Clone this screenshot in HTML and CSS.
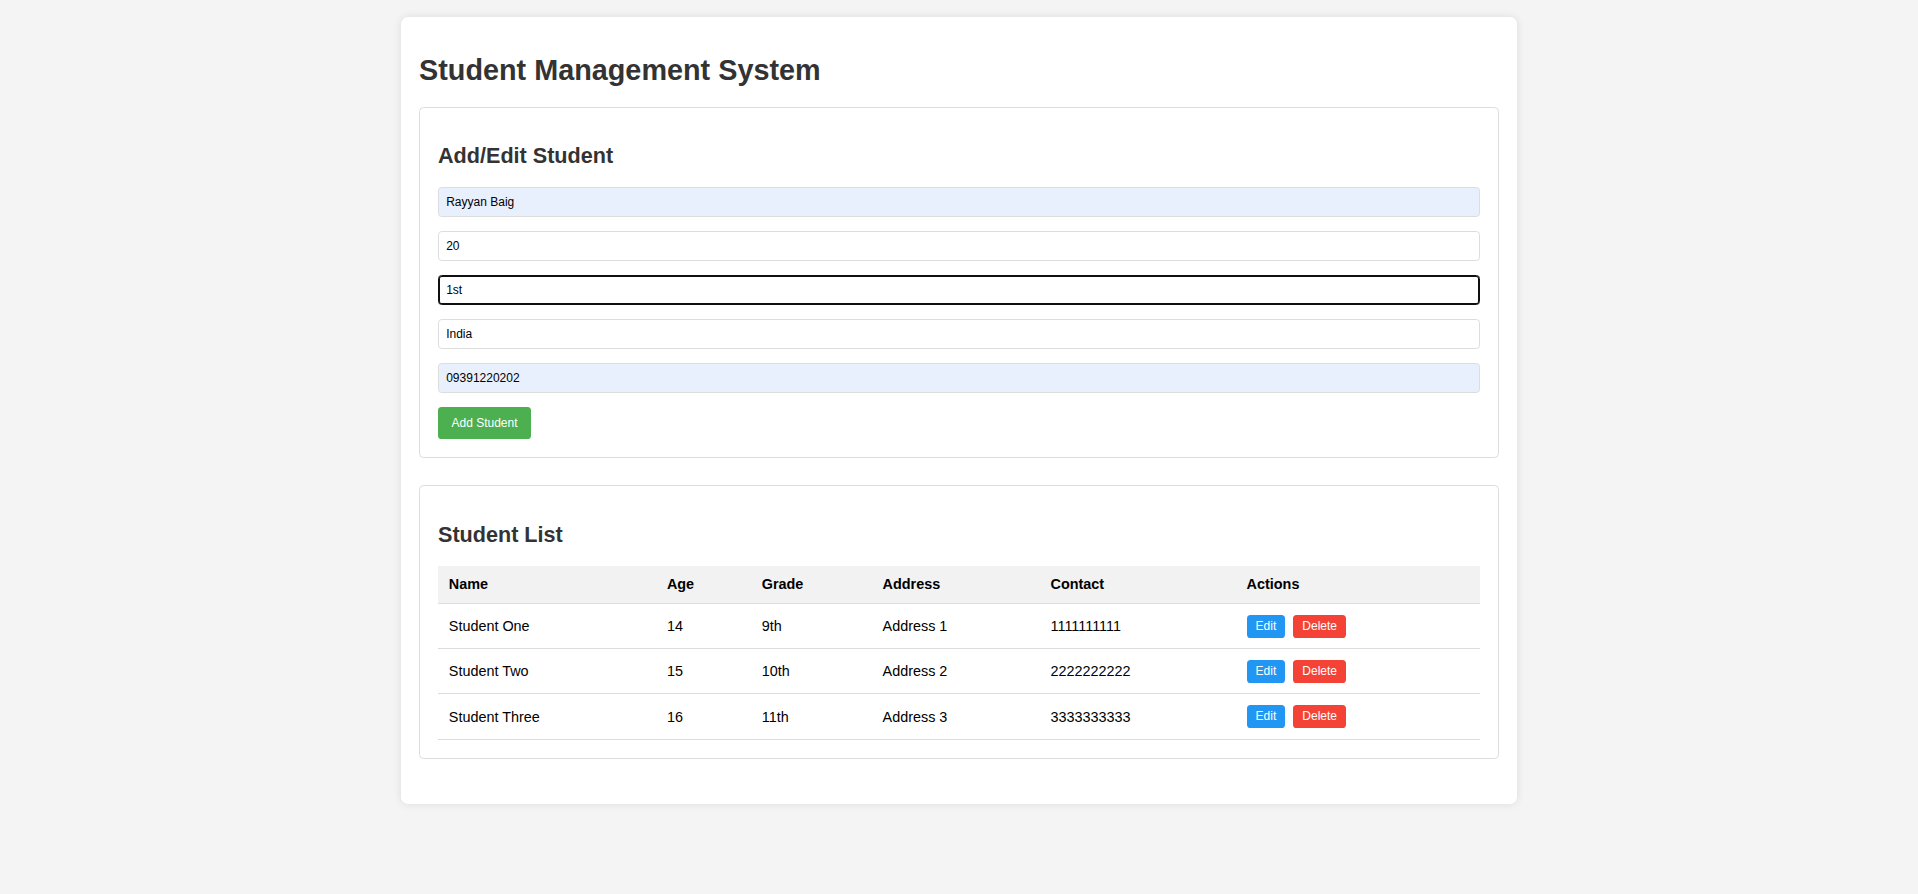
FILE: index.html
```html
<!DOCTYPE html>
<html lang="en">
<head>
<meta charset="utf-8">
<title>Student Management System</title>
<link rel="stylesheet" href="styles.css">
</head>
<body>
<div class="container">
  <h1 class="title">Student Management System</h1>
  <section class="card">
    <h2 class="card-title">Add/Edit Student</h2>
    <form class="student-form">
      <input class="field autofilled" type="text" value="Rayyan Baig">
      <input class="field" type="text" value="20">
      <input class="field focused" type="text" value="1st">
      <input class="field" type="text" value="India">
      <input class="field autofilled" type="text" value="09391220202">
      <button class="btn btn-add" type="button">Add Student</button>
    </form>
  </section>
  <section class="card">
    <h2 class="card-title">Student List</h2>
    <table class="students">
      <thead>
        <tr>
          <th class="c-name">Name</th>
          <th class="c-age">Age</th>
          <th class="c-grade">Grade</th>
          <th class="c-address">Address</th>
          <th class="c-contact">Contact</th>
          <th class="c-actions">Actions</th>
        </tr>
      </thead>
      <tbody>
        <tr>
          <td>Student One</td><td>14</td><td>9th</td><td>Address 1</td><td>1111111111</td>
          <td><button class="btn btn-edit" type="button">Edit</button><button class="btn btn-delete" type="button">Delete</button></td>
        </tr>
        <tr>
          <td>Student Two</td><td>15</td><td>10th</td><td>Address 2</td><td>2222222222</td>
          <td><button class="btn btn-edit" type="button">Edit</button><button class="btn btn-delete" type="button">Delete</button></td>
        </tr>
        <tr>
          <td>Student Three</td><td>16</td><td>11th</td><td>Address 3</td><td>3333333333</td>
          <td><button class="btn btn-edit" type="button">Edit</button><button class="btn btn-delete" type="button">Delete</button></td>
        </tr>
      </tbody>
    </table>
  </section>
</div>
</body>
</html>
```
FILE: styles.css
```css
html, body {
  margin: 0;
  padding: 0;
}
body {
  background: #f4f4f4;
  font-family: "Liberation Sans", Arial, sans-serif;
  font-size: 14.4px;
  color: #000;
}
.container {
  width: 1080px;
  margin: 17px auto;
  padding: 18px;
  background: #fff;
  border-radius: 7px;
  box-shadow: 0 0 9px rgba(0, 0, 0, 0.1);
}
.title {
  font-size: 28.8px;
  font-weight: bold;
  color: #333;
  margin: 19.3px 0;
}
.card {
  border: 1px solid #ddd;
  border-radius: 4.5px;
  padding: 18px;
  margin-bottom: 27px;
}
.card-title {
  font-size: 21.6px;
  font-weight: bold;
  color: #333;
  margin: 17.9px 0;
}
.student-form {
  display: flex;
  flex-direction: column;
  align-items: flex-start;
}
.field {
  box-sizing: border-box;
  width: 100%;
  height: 30px;
  margin: 0 0 14px 0;
  padding: 0 7.2px;
  border: 1px solid #ddd;
  border-radius: 3.6px;
  font-family: "Liberation Sans", Arial, sans-serif;
  font-size: 12px;
  color: #000;
  background: #fff;
  outline: none;
}
.field.autofilled {
  background: #e8f0fe;
}
.field.focused {
  border-color: #101010;
  box-shadow: inset 0 0 0 1px #101010;
}
.btn {
  border: none;
  color: #fff;
  font-family: "Liberation Sans", Arial, sans-serif;
  font-size: 12px;
  border-radius: 3.6px;
  cursor: pointer;
  line-height: 13.8px;
}
.btn-add {
  background: #4caf50;
  padding: 10px 13.5px 8px;
  height: 32px;
}
.btn-edit,
.btn-delete {
  padding: 5px 9px 4px;
  height: 23px;
  vertical-align: middle;
}
.btn-edit {
  background: #2196f3;
  margin-right: 8px;
}
.btn-delete {
  background: #f44336;
}
.students {
  width: 100%;
  border-collapse: collapse;
  font-size: 14.4px;
}
.students th,
.students td {
  text-align: left;
  border-bottom: 1px solid #ddd;
  padding: 11px 10.8px 10.4px;
  vertical-align: middle;
}
.students th {
  background: #f2f2f2;
  font-weight: bold;
  padding-top: 10.2px;
  padding-bottom: 10.2px;
}
.students td {
  height: 23px;
}
.c-name { width: 196px; }
.c-age { width: 73px; }
.c-grade { width: 99px; }
.c-address { width: 146px; }
.c-contact { width: 174px; }
.c-actions { width: 222px; }
```
